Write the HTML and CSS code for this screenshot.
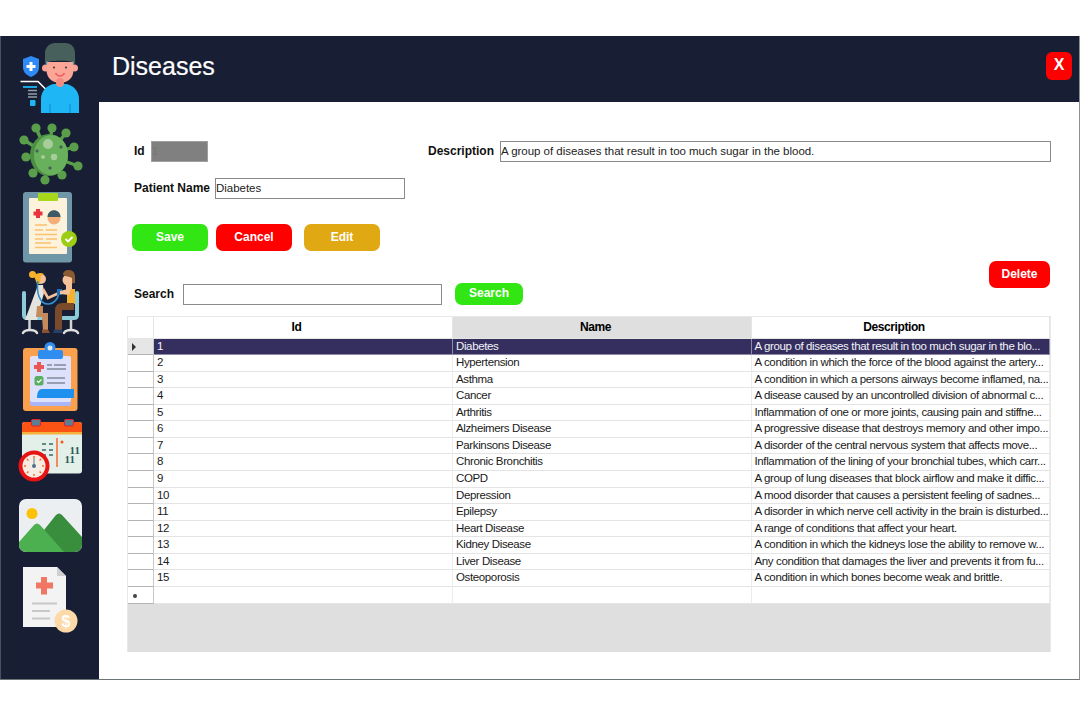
FILE: index.html
```html
<!DOCTYPE html>
<html lang="en">
<head>
<meta charset="utf-8">
<title>Diseases</title>
<link rel="stylesheet" href="styles.css">
</head>
<body>
<div class="window">
  <nav class="sidebar">
    <svg class="slot s1" viewBox="0 36 99 82">
      <path d="M31 56l8 3v8c0 5-3 8-8 10-5-2-8-5-8-10v-8z" fill="#2e8bf5"/>
      <path d="M29.500 62h3v3h3v3h-3v3h-3v-3h-3v-3h3z" fill="#fff"/>
      <path d="M20.500 81.500H38L48.500 92" fill="none" stroke="#fff" stroke-width="1.500"/>
      <path d="M23 87h14" stroke="#1fb6f5" stroke-width="1.800"/>
      <path d="M28 90.500h9M28 94h9M28 97h9" stroke="#8fa0a8" stroke-width="1.300"/>
      <rect x="30" y="100" width="5.500" height="6" rx="1" fill="#1fb6f5"/>
      <path d="M41 113V99c0-8 6-14 13-15h12c7 1 13 7 13 15v14z" fill="#1fb6f5"/>
      <path d="M50 113v-9M70 113v-9" stroke="#1398d8" stroke-width="1.500"/>
      <circle cx="45.500" cy="68" r="3.500" fill="#f8a395"/>
      <circle cx="74.500" cy="68" r="3.500" fill="#f8a395"/>
      <path d="M46.500 62h27v8c0 8-6 13-13.500 13s-13.500-5-13.500-13z" fill="#fba697"/>
      <rect x="56" y="78" width="8" height="9" rx="4" fill="#f08d80"/>
      <path d="M45 63V53c0-6 5-10 10-10h10c6 0 10 4 10 10v10c-4-3-26-3-30 0z" fill="#47605c"/>
      <path d="M45.500 64c.5-2 1-3 2-3l-.5 4zM74.500 64c-.5-2-1-3-2-3l.5 4z" fill="#5d9eb0"/>
      <circle cx="54" cy="67.500" r="1" fill="#333"/><circle cx="66" cy="67.500" r="1" fill="#333"/>
      <path d="M55.500 73c2 4 7 4 9 0" fill="none" stroke="#ef5e5e" stroke-width="1.600"/>
    </svg>
    <svg class="slot s2" viewBox="0 118 99 70">
      <g stroke="#5a9e4b" stroke-width="3.400" fill="none">
        <path d="M48 155L36 128M48 155L52 128M48 155L66 133M48 155L74 147M48 155L78 166M48 155L62 175M48 155L45 180M48 155L33 173M48 155L26 157M48 155L24 140"/>
      </g>
      <g fill="#5a9e4b">
        <circle cx="36" cy="128" r="4.600"/><circle cx="52" cy="128" r="4.600"/><circle cx="66" cy="133" r="4.600"/><circle cx="74" cy="147" r="4.600"/><circle cx="78" cy="166" r="4.600"/><circle cx="62" cy="175" r="4.600"/><circle cx="45" cy="180" r="4.600"/><circle cx="33" cy="173" r="4.600"/><circle cx="26" cy="157" r="4.600"/><circle cx="24" cy="140" r="4.600"/>
      </g>
      <ellipse cx="49" cy="155" rx="19" ry="21" fill="#4c8f43"/>
      <ellipse cx="51" cy="155" rx="17" ry="20" fill="#68b05c"/>
      <circle cx="48" cy="144" r="5" fill="#a6cd9a"/><circle cx="54" cy="157" r="3.200" fill="#a6cd9a"/><circle cx="43" cy="157" r="2" fill="#a6cd9a"/>
      <g fill="#46605a">
        <path d="M37 149l2 2-2 2-2-2z"/><path d="M61 145l2 2-2 2-2-2z"/><path d="M50 166l2 2-2 2-2-2z"/>
      </g>
    </svg>
    <svg class="slot s3" viewBox="0 188 99 78">
      <rect x="23" y="192" width="49" height="70.500" rx="3" fill="#6f97a7"/>
      <rect x="29" y="198" width="38" height="56" rx="1" fill="#fdf3dc"/>
      <rect x="38" y="193" width="20" height="8" rx="1" fill="#a8d81c"/>
      <path d="M36 209h4v2.500h2.500v4H40v2.500h-4V215.500h-2.500v-4H36z" fill="#e8343c"/>
      <circle cx="54" cy="218" r="6.500" fill="#f3ae7a"/>
      <path d="M47.500 217c0-9 13-9 13 0z" fill="#3d5a66"/>
      <path d="M35 225h12M35 230h8M46 230h11M35 234.500h22M35 239h8M46 239h11M35 243h16M35 247.500h22" stroke="#fbc16e" stroke-width="1.500"/>
      <circle cx="69" cy="239" r="8" fill="#9ccd12"/>
      <path d="M65.500 239l2.500 2.500 4.500-4.500" fill="none" stroke="#fff" stroke-width="1.800"/>
    </svg>
    <svg class="slot s4" viewBox="0 266 99 73">
      <path d="M24 293v22c0 2 1 3 3 3h15M77 293v22c0 2-1 3-3 3H63" fill="none" stroke="#8ecbd8" stroke-width="4" stroke-linecap="round"/>
      <path d="M29.500 320v10M71 320v10" stroke="#d4d4d4" stroke-width="2.500"/>
      <path d="M23 333c2-4 12-4 14 0M64 333c2-4 12-4 14 0" fill="none" stroke="#e0e0e0" stroke-width="2.500" stroke-linecap="round"/>
      <circle cx="32.500" cy="274.500" r="3.500" fill="#f5b32d"/>
      <circle cx="41" cy="279" r="5" fill="#f4c19a"/>
      <path d="M34 276c2-3 7-4 10-2l-3 2-1 8h-3z" fill="#f5b32d"/>
      <path d="M38 285h5l1 8-4 14-3 13H25z" fill="#e4e4df"/>
      <path d="M37 306h6v7h5v17h-5l-1-13h-6z" fill="#c58a5c"/>
      <path d="M42 329.500h6l2 3.500h-8z" fill="#8a5232"/>
      <path d="M43 289l5 9 11-5" fill="none" stroke="#f4c19a" stroke-width="2.600"/>
      <path d="M38 281c-2 12 2 24 11 23 6-1 9-6 10-11" fill="none" stroke="#2f8fd0" stroke-width="1.600"/>
      <rect x="57" y="289" width="5" height="6" fill="#1e70b8"/>
      <circle cx="68" cy="280" r="5.500" fill="#f4c19a"/>
      <path d="M63 275c0-4 3-5 6-5 4 0 6 3 6 7v6h-3v-5c-3-2-6-1-9-3z" fill="#8a5a33"/>
      <rect x="66" y="284" width="6" height="6" fill="#f4c19a"/>
      <path d="M67 289h8v15H67z" fill="#f5b32d"/>
      <path d="M71 289h-3l-8 2v3l9 1z" fill="#f4c19a"/>
      <path d="M62 303h12v7H62v20h-7v-20c0-4 3-7 7-7z" fill="#7a4a2a"/>
      <path d="M54 329.500h8v3.500h-9z" fill="#2a3f66"/>
    </svg>
    <svg class="slot s5" viewBox="0 339 99 77">
      <rect x="23" y="348" width="54.500" height="63" rx="3" fill="#fba04d"/>
      <rect x="30" y="360" width="41" height="46" rx="2" fill="#a9b5f5"/>
      <rect x="30" y="356" width="41" height="46" rx="2" fill="#dde1fb"/>
      <path d="M37 398c0-6 2-9 5-9h32v9z" fill="#1e90ee"/>
      <rect x="38" y="350" width="25" height="9" rx="2" fill="#2f8df0"/>
      <circle cx="50" cy="347.500" r="5.500" fill="#2f8df0"/><circle cx="50" cy="348" r="2.500" fill="#dbe9f8"/>
      <path d="M37 362h4v3h3v4h-3v3h-4v-3h-3v-4h3z" fill="#e95757"/>
      <path d="M47 365h5M54 365h12M47 369h19M47 378h18M47 383h18" stroke="#7f8a9a" stroke-width="1.300"/>
      <rect x="34.500" y="376" width="9" height="9.500" rx="2.500" fill="#58ae60"/>
      <path d="M37 381l1.500 1.500 3-3" fill="none" stroke="#fff" stroke-width="1.200"/>
    </svg>
    <svg class="slot s6" viewBox="0 416 99 77">
      <rect x="22" y="422" width="60" height="51.500" rx="3" fill="#e3efe9"/>
      <path d="M22 432v-7c0-2 1-3 3-3h54c2 0 3 1 3 3v7z" fill="#fb5314"/>
      <rect x="22" y="432" width="60" height="2.500" fill="#f5b13e"/>
      <rect x="31.500" y="419.500" width="9" height="6.500" rx="1" fill="#5a7f94" stroke="#e8202a"/>
      <rect x="64.500" y="419.500" width="9" height="6.500" rx="1" fill="#5a7f94" stroke="#e8202a"/>
      <path d="M42 444h4M49 444h4M42 450h4M49 450h4M42 455h4M49 455h4" stroke="#3d6a68" stroke-width="1.500"/>
      <path d="M57 438v29" stroke="#fb6a2c" stroke-width="1.500"/>
      <circle cx="62" cy="442" r="1.500" fill="#fb5314"/>
      <text class="cal"><tspan x="69.500" y="453.500">11</tspan><tspan x="64.500" y="462.500">11</tspan></text>
      <circle cx="34" cy="466" r="15.500" fill="#e81313"/>
      <circle cx="34" cy="466" r="11.500" fill="#f6ece2"/>
      <g stroke="#f26a2a" stroke-width="1.400"><path d="M34 456v2M44 466h-2M34 476v-2M24 466h2M41 459l-1.400 1.400M41 473l-1.400-1.400M27 473l1.400-1.400M27 459l1.400 1.400"/></g>
      <path d="M34 458v8" stroke="#5a7f94" stroke-width="1"/>
      <circle cx="34" cy="466" r="2" fill="#4e7088"/>
    </svg>
    <svg class="slot s7" viewBox="0 493 99 67">
      <clipPath id="pic"><rect x="19" y="499" width="63" height="53" rx="7"/></clipPath>
      <g clip-path="url(#pic)">
        <rect x="19" y="499" width="63" height="53" fill="#eceff1"/>
        <circle cx="32" cy="513.500" r="5.500" fill="#ffc107"/>
        <path d="M44 530l12-15c2-2 4-2 6 0l20 22v15H60z" fill="#388e3c"/>
        <path d="M19 542l15-17c2-2 4-2 6 0l24 27H19z" fill="#4caf50"/>
      </g>
    </svg>
    <svg class="slot s8" viewBox="0 560 99 83">
      <path d="M23 567h34l9 9v51H23z" fill="#f3f3f3"/>
      <path d="M57 567l9 9h-9z" fill="#cfcfcf"/>
      <path d="M41 577h6v5.500h6v6h-6v6h-6v-6h-5v-6h5z" fill="#ef7763"/>
      <path d="M32 603.500h25M32 611h18M32 618.500h18" stroke="#c8c8c8" stroke-width="2"/>
      <circle cx="66" cy="621" r="11.500" fill="#fdd9a8"/>
      <text class="coin" x="66" y="627">$</text>
    </svg>
  </nav>
  <div class="main">
    <header class="topbar">
      <h1 class="title">Diseases</h1>
      <button class="btn close">X</button>
    </header>
    <section class="content">
      <div class="form-row first">
        <div class="group">
          <label class="lbl">Id</label>
          <input class="field idf" value="1" disabled>
        </div>
        <div class="group desc">
          <label class="lbl">Description</label>
          <input class="field descf" value="A group of diseases that result in too much sugar in the blood.">
        </div>
      </div>
      <div class="form-row second">
        <div class="group tight">
          <label class="lbl">Patient Name</label>
          <input class="field namef" value="Diabetes">
        </div>
      </div>
      <div class="actions">
        <button class="btn green act">Save</button>
        <button class="btn red act">Cancel</button>
        <button class="btn amber act gap-wide">Edit</button>
      </div>
      <div class="search-row">
        <div class="group search">
          <label class="lbl">Search</label>
          <input class="field searchf">
          <button class="btn green searchb">Search</button>
        </div>
        <button class="btn red delete">Delete</button>
      </div>
      <div class="grid">
        <div class="row head">
          <div class="rh"></div><div class="c">Id</div><div class="c sorted">Name</div><div class="c">Description</div>
        </div>
        <div class="row sel"><div class="rh"><span class="arrow"></span></div><div class="c">1</div><div class="c">Diabetes</div><div class="c">A group of diseases that result in too much sugar in the blo...</div></div>
        <div class="row"><div class="rh"></div><div class="c">2</div><div class="c">Hypertension</div><div class="c">A condition in which the force of the blood against the artery...</div></div>
        <div class="row"><div class="rh"></div><div class="c">3</div><div class="c">Asthma</div><div class="c">A condition in which a persons airways become inflamed, na...</div></div>
        <div class="row"><div class="rh"></div><div class="c">4</div><div class="c">Cancer</div><div class="c">A disease caused by an uncontrolled division of abnormal c...</div></div>
        <div class="row"><div class="rh"></div><div class="c">5</div><div class="c">Arthritis</div><div class="c">Inflammation of one or more joints, causing pain and stiffne...</div></div>
        <div class="row"><div class="rh"></div><div class="c">6</div><div class="c">Alzheimers Disease</div><div class="c">A progressive disease that destroys memory and other impo...</div></div>
        <div class="row"><div class="rh"></div><div class="c">7</div><div class="c">Parkinsons Disease</div><div class="c">A disorder of the central nervous system that affects move...</div></div>
        <div class="row"><div class="rh"></div><div class="c">8</div><div class="c">Chronic Bronchitis</div><div class="c">Inflammation of the lining of your bronchial tubes, which carr...</div></div>
        <div class="row"><div class="rh"></div><div class="c">9</div><div class="c">COPD</div><div class="c">A group of lung diseases that block airflow and make it diffic...</div></div>
        <div class="row"><div class="rh"></div><div class="c">10</div><div class="c">Depression</div><div class="c">A mood disorder that causes a persistent feeling of sadnes...</div></div>
        <div class="row"><div class="rh"></div><div class="c">11</div><div class="c">Epilepsy</div><div class="c">A disorder in which nerve cell activity in the brain is disturbed...</div></div>
        <div class="row"><div class="rh"></div><div class="c">12</div><div class="c">Heart Disease</div><div class="c">A range of conditions that affect your heart.</div></div>
        <div class="row"><div class="rh"></div><div class="c">13</div><div class="c">Kidney Disease</div><div class="c">A condition in which the kidneys lose the ability to remove w...</div></div>
        <div class="row"><div class="rh"></div><div class="c">14</div><div class="c">Liver Disease</div><div class="c">Any condition that damages the liver and prevents it from fu...</div></div>
        <div class="row"><div class="rh"></div><div class="c">15</div><div class="c">Osteoporosis</div><div class="c">A condition in which bones become weak and brittle.</div></div>
        <div class="row new"><div class="rh"><span class="star"></span></div><div class="c"></div><div class="c"></div><div class="c"></div></div>
      </div>
    </section>
  </div>
</div>
</body>
</html>
```

FILE: styles.css
```css
* { box-sizing: border-box; }
html, body { margin: 0; height: 100%; background: #fff; }
body { padding-top: 36px; font-family: "Liberation Sans", Arial, sans-serif; font-size: 12px; color: #000; overflow: hidden; }

.window { display: flex; height: 644px; width: 1080px; border-bottom: 1px solid #6d7478; border-right: 1px solid #8b8f93; }

.sidebar { width: 99px; flex: none; background: #181e33; border-left: 1px solid #4a5060; display: flex; flex-direction: column; }
.slot { display: block; width: 99px; flex: none; margin-left: -1px; }
.s1 { height: 82px; } .s2 { height: 70px; } .s3 { height: 78px; } .s4 { height: 73px; }
.s5 { height: 77px; } .s6 { height: 77px; } .s7 { height: 67px; } .s8 { height: 83px; }
.cal { font: bold 11px "Liberation Serif", serif; fill: #2d5a55; }
.coin { font: bold 16px "Liberation Sans", sans-serif; fill: #fff; text-anchor: middle; }

.main { flex: 1; min-width: 0; display: flex; flex-direction: column; }
.topbar { height: 66px; flex: none; background: #181e33; display: flex; align-items: center; justify-content: space-between; padding: 0 7px 6px 13px; }
.title { margin: 0; font-size: 25px; font-weight: 400; color: #fff; -webkit-text-stroke: 0.2px #fff; }

.btn { border: 0; padding: 0 0 2px; font-family: inherit; font-weight: 700; color: #fff; cursor: pointer; display: block; }
.close { width: 26px; height: 28px; background: #ff0000; border-radius: 6px; font-size: 16px; }
.green { background: #32e614; }
.red { background: #ff0000; }
.amber { background: #e0a913; }
.act { width: 76px; height: 27px; border-radius: 7px; font-size: 12px; }
.gap-wide { margin-left: 4px; }

.content { flex: 1; padding: 39px 29px 0 28px; }
.form-row { display: flex; align-items: center; padding-left: 7px; }
.first { height: 21px; justify-content: space-between; margin-right: -1px; }
.second { height: 21px; margin-top: 16px; }
.group { display: flex; align-items: center; }
.tight { gap: 5px; }
.lbl { font-weight: 700; font-size: 12px; color: #111; white-space: nowrap; padding-bottom: 2px; }
.field { display: block; height: 21px; border: 1px solid #8a8a8a; border-radius: 0; padding: 0 0 2px; margin: 0; font: 11.500px "Liberation Sans", sans-serif; letter-spacing: -0.03px; color: #222; background: #fff; outline: 0; }
.idf { width: 57px; margin-left: 6px; background: #808080; border-color: #a0a0a0; color: #767676; }
.desc { gap: 6px; }
.descf { width: 551px; }
.namef { width: 190px; }
.actions { display: flex; gap: 8px; margin-top: 25px; padding-left: 5px; }
.search-row { display: flex; justify-content: space-between; margin-top: 10px; height: 44px; margin-bottom: 11px; padding-left: 7px; }
.search { align-self: flex-end; height: 22px; }
.search .lbl { padding-bottom: 0; }
.searchf { width: 259px; margin: 1px 0 0 9px; }
.searchb { width: 68px; height: 22px; border-radius: 7px; font-size: 12px; margin-left: 13px; }
.delete { width: 61px; height: 27px; border-radius: 7px; font-size: 12px; }

.grid { width: 924px; height: 336px; background: #dfdfdf; border: 1px solid #e8e8e8; border-bottom: 0; }
.row { display: grid; grid-template-columns: 26px 299px 299px 298px; height: 16.570px; background: #fff; line-height: 15px; }
.rh { background: #fff; border-right: 1px solid #c8c8c8; border-bottom: 1px solid #b4b4b4; position: relative; }
.c { padding-left: 3px; border-right: 1px solid #ececec; border-bottom: 1px solid #e4e4e4; white-space: nowrap; overflow: hidden; color: #1a1a1a; font-size: 11.500px; letter-spacing: -0.37px; }
.c:last-child { padding-left: 2.500px; }
.head { height: 21.500px; line-height: 21px; }
.head .c { text-align: center; font-weight: 700; font-size: 12px; letter-spacing: -0.4px; color: #000; padding: 0 13px 0 0; border-right-color: #e6e6e6; }
.head .rh { border-bottom-color: #e4e4e4; border-right-color: #e6e6e6; }
.sorted { background: #dfdfdf; }
.sel .c { background: #352f5f; color: #f2f2f8; border-right-color: #8f8aa8; border-bottom-color: #8f8aa8; }
.sel .rh { background: #e6e6e6; }
.arrow { position: absolute; left: 4px; top: 4px; border-left: 4px solid #333; border-top: 4px solid transparent; border-bottom: 4px solid transparent; }
.star { position: absolute; left: 5px; top: 7px; width: 4px; height: 4px; border-radius: 50%; background: #444; }
```
